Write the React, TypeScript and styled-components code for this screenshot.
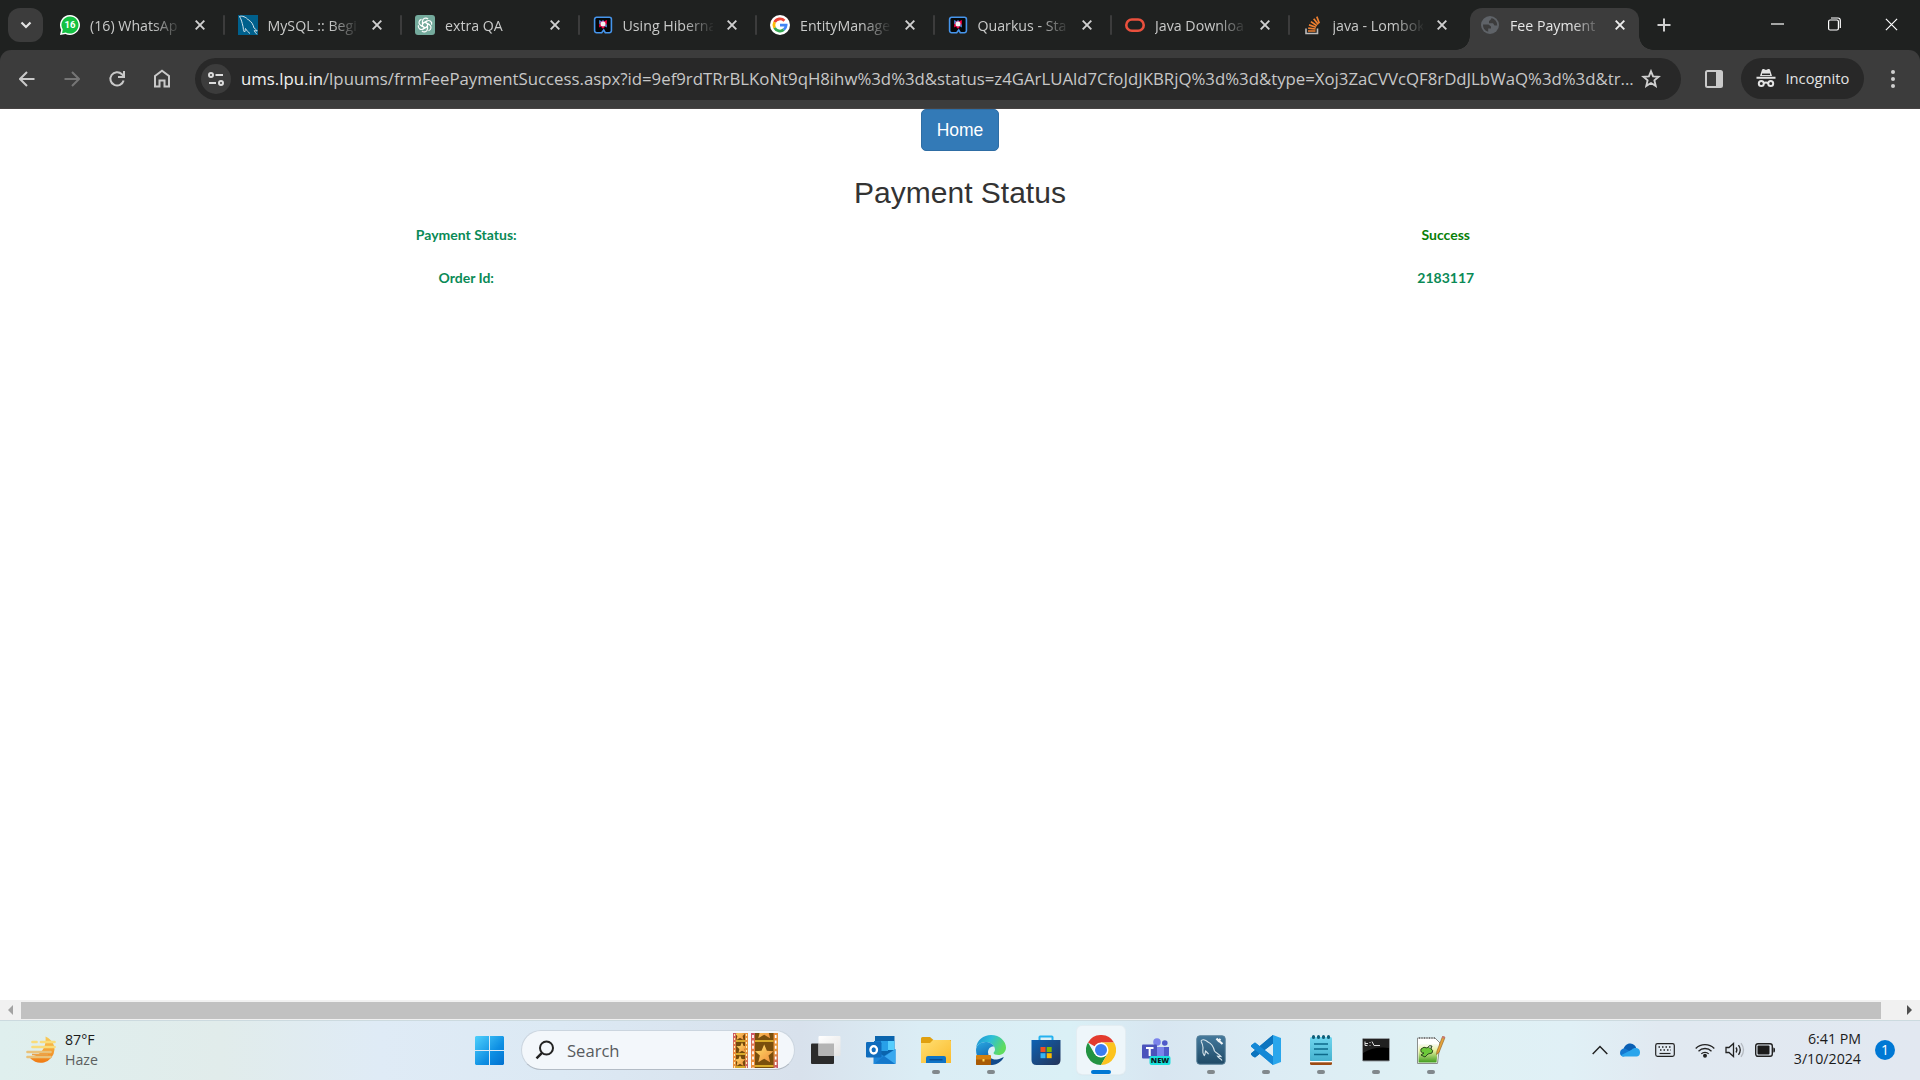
import React from "react";
import styled, { createGlobalStyle, css } from "styled-components";

const ui = `"Segoe UI", "Open Sans", "Noto Sans", sans-serif`;

const Global = createGlobalStyle`
  html, body { margin: 0; padding: 0; overflow: hidden; background: #fff; }
  *, *::before, *::after { box-sizing: border-box; }
  svg { display: block; flex: none; }
`;

const Screen = styled.div`
  width: 1920px;
  height: 1080px;
  display: flex;
  flex-direction: column;
  overflow: hidden;
  font-family: ${ui};
`;

/* ---------- tab strip ---------- */
const TabStrip = styled.div`
  height: 50px;
  flex: none;
  display: flex;
  background: #1f2120;
  padding-left: 8px;
`;
const TabSearch = styled.div`
  width: 35px;
  height: 34px;
  margin: 8px 4px 0 0;
  border-radius: 12px;
  background: #3c3c3c;
  display: flex;
  align-items: center;
  justify-content: center;
`;
const Tab = styled.div<{ $active?: boolean; $rule?: boolean }>`
  width: 177.5px;
  height: 50px;
  flex: none;
  display: flex;
  align-items: center;
  padding-left: 13px;
  position: relative;
  ${(p) =>
    p.$rule &&
    css`
      &::after {
        content: "";
        position: absolute;
        right: 0;
        top: 15px;
        width: 2px;
        height: 20px;
        border-radius: 1px;
        background: #3c3c3c;
      }
    `}
  ${(p) =>
    p.$active &&
    css`
      width: 169px;
      height: 42px;
      margin: 8px 0 0 3px;
      padding: 0 0 8px 10px;
      border-radius: 12px 12px 0 0;
      background: #3c3c3c;
      &::before,
      &::after {
        content: "";
        position: absolute;
        bottom: 0;
        width: 14px;
        height: 14px;
      }
      &::before {
        left: -14px;
        background: radial-gradient(circle at 0 0, transparent 13.5px, #3c3c3c 14px);
      }
      &::after {
        right: -14px;
        background: radial-gradient(circle at 100% 0, transparent 13.5px, #3c3c3c 14px);
      }
    `}
`;
const Favicon = styled.div`
  width: 20px;
  height: 20px;
  flex: none;
`;
const TabTitle = styled.div<{ $active?: boolean }>`
  width: 90px;
  margin-left: 10px;
  padding-top: 1px;
  overflow: hidden;
  white-space: nowrap;
  font-size: 14.2px;
  line-height: 22px;
  font-stretch: 92%;
  color: ${(p) => (p.$active ? "#e6e6e6" : "#c9cac9")};
  mask-image: linear-gradient(90deg, #000 62px, transparent 92px);
`;
const CloseSlot = styled.div`
  width: 20px;
  margin-left: 9.5px;
  display: flex;
  justify-content: center;
`;
const NewTab = styled.div`
  width: 49px;
  display: flex;
  align-items: center;
  justify-content: center;
`;
const WindowControls = styled.div`
  margin-left: auto;
  width: 171px;
  height: 48px;
  display: grid;
  grid-template-columns: repeat(3, 57px);
  place-items: center;
`;

/* ---------- toolbar ---------- */
const ToolbarBack = styled.div`
  height: 59px;
  flex: none;
  background: #1f2120;
`;
const Toolbar = styled.div`
  height: 59px;
  background: #3c3c3c;
  border-radius: 11px 11px 0 0;
  border-bottom: 1px solid #474343;
  display: flex;
  align-items: center;
  padding: 0 16px 1px 5px;
`;
const NavButton = styled.div`
  width: 44.75px;
  display: flex;
  justify-content: center;
`;
const Omnibox = styled.div`
  width: 1486px;
  height: 42px;
  margin-left: 11px;
  border-radius: 21px;
  background: #282828;
  display: flex;
  align-items: center;
  padding: 0 20px 0 6px;
`;
const SiteInfo = styled.div`
  width: 30px;
  height: 30px;
  border-radius: 50%;
  background: #3c3c3c;
  display: flex;
  align-items: center;
  justify-content: center;
`;
const Url = styled.div`
  margin-left: 10px;
  white-space: nowrap;
  font-size: 16.8px;
  line-height: 26px;
  font-stretch: 92%;
  color: #c7c7c7;
`;
const Host = styled.span`
  color: #f0f0f0;
`;
const StarSlot = styled.div`
  margin-left: auto;
`;
const PanelSlot = styled.div`
  margin-left: 24px;
`;
const Incognito = styled.div`
  width: 123px;
  height: 41px;
  margin-left: 18px;
  border-radius: 21px;
  background: #282828;
  display: flex;
  align-items: center;
  padding-left: 15px;
  gap: 9.5px;
  font-size: 14.7px;
  line-height: 20px;
  padding-bottom: 1px;
  color: #e3e3e3;
`;
const MenuSlot = styled.div`
  margin-left: auto;
  width: 22px;
  display: flex;
  justify-content: center;
`;

/* ---------- page ---------- */
const Page = styled.main`
  flex: 1;
  background: #fff;
  display: flex;
  flex-direction: column;
  align-items: center;
`;
const HomeButton = styled.button`
  width: 78px;
  height: 42px;
  padding: 0;
  border: 1px solid #2e6da4;
  border-radius: 5px;
  background: #337ab7;
  color: #fff;
  font: 17.5px/25px "Liberation Sans", Arial, sans-serif;
`;
const Heading = styled.h3`
  margin: 25px 0 13px;
  font: 400 30px/33px "Liberation Sans", Arial, sans-serif;
  color: #333;
`;
const Row = styled.div`
  width: 1959px;
  height: 43px;
  margin-right: 8px;
  display: grid;
  grid-template-columns: 1fr 1fr;
  justify-items: center;
`;
const Cell = styled.div<{ $color?: string }>`
  font: 700 14px/25px "Trebuchet MS", Lato, sans-serif;
  color: ${(p) => p.$color ?? "#0a8a56"};
`;

/* ---------- scrollbar ---------- */
const Scrollbar = styled.div`
  height: 20px;
  flex: none;
  display: flex;
  align-items: center;
  background: #f1f1f1;
`;
const ScrollArrow = styled.div<{ $dir: "left" | "right" }>`
  width: 0;
  border-top: 5px solid transparent;
  border-bottom: 5px solid transparent;
  ${(p) =>
    p.$dir === "left"
      ? css`
          border-right: 5px solid #a3a3a3;
          margin: 0 8px;
        `
      : css`
          border-left: 5px solid #505050;
          margin-left: 26px;
        `}
`;
const Thumb = styled.div`
  width: 1860px;
  height: 17px;
  background: #c1c1c1;
`;

/* ---------- taskbar ---------- */
const Taskbar = styled.footer`
  height: 60px;
  flex: none;
  display: flex;
  align-items: center;
  border-top: 1px solid #ccdadf;
  padding-bottom: 1px;
  background: linear-gradient(
    90deg,
    #dfefee 0,
    #e1eceb 220px,
    #dfebf6 380px,
    #dce9f4 560px,
    #d8e1ec 800px,
    #dbedf5 920px,
    #daf0f6 1070px,
    #d8e6f1 1160px,
    #dcecf4 1270px,
    #dff1f4 1450px,
    #e0f0f6 1570px,
    #e1e9f1 1660px,
    #e2e8f1 100%
  );
`;
const Weather = styled.div`
  width: 475px;
  padding-left: 26px;
  display: flex;
  align-items: center;
  gap: 9px;
`;
const TwoLines = styled.div<{ $end?: boolean }>`
  font-size: 14.2px;
  line-height: 20px;
  color: #1b1b1b;
  text-align: ${(p) => (p.$end ? "right" : "left")};
  padding-bottom: ${(p) => (p.$end ? "2px" : "0")};
`;
const Muted = styled.div`
  color: #5c6060;
`;
const SearchBox = styled.div`
  width: 274px;
  height: 40px;
  margin: 0 3px 0 17px;
  border: 1px solid #cbd5df;
  border-bottom-color: #b3bcc6;
  border-radius: 20px;
  background: #f3f7fb;
  display: flex;
  align-items: center;
  padding: 0 16px 0 13px;
  font-size: 16.6px;
  color: #585b5e;
  gap: 12px;
`;
const FilmSlot = styled.div`
  margin-left: auto;
`;
const AppSlot = styled.div`
  width: 55px;
  height: 58px;
  flex: none;
  display: flex;
  justify-content: center;
  align-items: center;
  position: relative;
`;
const AppTile = styled.div<{ $active?: boolean }>`
  width: 48px;
  height: 48px;
  border-radius: 5px;
  display: flex;
  align-items: center;
  justify-content: center;
  ${(p) => p.$active && "background: #eef6fa; box-shadow: 0 0 0 1px #e3edf2, 0 1px 1px #c9d5db;"}
`;
const Indicator = styled.div<{ $active?: boolean }>`
  position: absolute;
  bottom: 5px;
  width: ${(p) => (p.$active ? 20 : 8)}px;
  height: 4px;
  border-radius: 2px;
  background: ${(p) => (p.$active ? "#0078d4" : "#81888c")};
`;
const Tray = styled.div`
  margin-left: auto;
  display: flex;
  align-items: center;
  padding-right: 25px;
`;
const TrayIcon = styled.div<{ $gap: number }>`
  margin-right: ${(p) => p.$gap}px;
`;
const ClockSlot = styled.div`
  width: 86px;
`;
const Badge = styled.div`
  width: 20px;
  height: 20px;
  margin-left: 14px;
  border-radius: 50%;
  background: #0078d4;
  color: #fff;
  font-size: 14px;
  line-height: 20px;
  text-align: center;
`;

/* ---------- favicons ---------- */
const WhatsApp = () => (
  <svg width="20" height="20" viewBox="0 0 20 20">
    <path d="M10 0a10 10 0 1 1-4.6 18.9L0 20l1.2-5.2A10 10 0 0 1 10 0z" fill="#fff" />
    <path d="M10 1.4a8.6 8.6 0 1 1-4.3 16.1L2 18.2l.8-3.7A8.6 8.6 0 0 1 10 1.4z" fill="#14c143" />
    <text x="10" y="13.4" textAnchor="middle" fontSize="9.5" fontWeight="700" fill="#fff" fontFamily="Roboto, sans-serif">16</text>
  </svg>
);
const MySQL = () => (
  <svg width="20" height="20" viewBox="0 0 20 20">
    <rect width="20" height="20" fill="#00608c" />
    <path d="M1.500 1.500C4 .5 8 2 10.500 5c3 1.500 4.700 4.500 5.500 8 1 1 2.500 1.500 3.200 3l-3-.3c0 1 1.800 2 2.600 3.600M1.500 1.500c2 3 2.500 6 3.500 10 .5 2 0 4 1.500 5.500C7.500 16 7 14.500 7.500 13.500c1.200 2.300 3 3.800 4.500 5" fill="none" stroke="#d5e5ec" strokeWidth="1" />
  </svg>
);
const ChatGPT = () => (
  <svg width="20" height="20" viewBox="0 0 20 20">
    <rect width="20" height="20" rx="3" fill="#74aa9c" />
    <g fill="none" stroke="#fff" strokeWidth="1.150">
      {[0, 60, 120, 180, 240, 300].map((a) => (
        <path key={a} transform={`rotate(${a} 10 10)`} d="M7.500 11.400V6.300a3.200 3.200 0 0 1 5.600-2.100M7.500 8.600l4.600-2.700" />
      ))}
    </g>
  </svg>
);
const QuarkusIcon = () => (
  <svg width="20" height="20" viewBox="0 0 20 20">
    <path d="M8.700 17.700H3.600A2 2 0 0 1 1.600 15.700V4.300A2 2 0 0 1 3.600 2.300h12.800a2 2 0 0 1 2 2v11.400a2 2 0 0 1-2 2h-4.100L10.700 15z" fill="#050708" stroke="#4695eb" strokeWidth="1.600" />
    <path d="M6.200 5l3.800 2-3.800 2.300z" fill="#4695eb" />
    <path d="M13.800 5L10 7l3.800 2.300zM6.200 12.500V9L9 10.800zM10 13.800l-2-2h4z" fill="#ff004a" />
    <path d="M10 4.800l2 3H8zM13.800 12.500V9L11 10.800z" fill="#4695eb" />
    <path d="M7.200 6.800L10 5.800l2.800 1.200.6 2.200-1.200 2.300L10 12.400l-2.200-1L6.700 9.200z" fill="#ff004a" opacity=".6" />
    <circle cx="10" cy="9" r="2.500" fill="#f2f2f2" />
  </svg>
);
const Google = () => (
  <svg width="20" height="20" viewBox="0 0 20 20">
    <circle cx="10" cy="10" r="10" fill="#fff" />
    <g fill="none" strokeWidth="2.800">
      <path d="M14.400 5.800A6.100 6.100 0 0 0 4.600 7.200" stroke="#ea4335" />
      <path d="M4.600 7.200a6.100 6.100 0 0 0 0 5.600" stroke="#fbbc05" />
      <path d="M4.600 12.800a6.100 6.100 0 0 0 9.200 1.900" stroke="#34a853" />
      <path d="M10 10.200h6.100a6.100 6.100 0 0 1-2.300 4.500" stroke="#4285f4" />
    </g>
  </svg>
);
const Oracle = () => (
  <svg width="20" height="20" viewBox="0 0 20 20">
    <rect x="1.300" y="4.500" width="17.400" height="11.300" rx="5.600" fill="none" stroke="#ea503d" strokeWidth="2.600" />
  </svg>
);
const Stack = () => (
  <svg width="20" height="20" viewBox="0 0 20 20">
    <path d="M3 13.500V18.500h11.500V13.500" fill="none" stroke="#bcbbbb" strokeWidth="1.600" />
    <path d="M5 16h7.500M5.200 13.100l7.400.9M6 9.900l7 2.300M7.900 6.600l6 4.100M10.700 3.700l4.500 5.700M13.800 1.600l2.500 6.700" fill="none" stroke="#ef8030" strokeWidth="1.700" />
  </svg>
);
const Globe = () => (
  <svg width="20" height="20" viewBox="0 0 20 20">
    <circle cx="10" cy="10" r="9" fill="#5f6368" />
    <path d="M3 9.500h5.500l2.500 2v2H8.200v3.300A7.300 7.300 0 0 1 3 9.500zM11.500 3c0 1.500-1.800 2.200-2.500 3.300v2h4l1.500 2.200h2.700A7.300 7.300 0 0 0 11.500 3z" fill="#3c3c3c" />
  </svg>
);

/* ---------- chrome glyphs ---------- */
const Cross = ({ size = 10, width = 1.9, color = "#d0d0d0" }) => (
  <svg width={size} height={size} viewBox="0 0 10 10">
    <path d="M.7.7l8.600 8.600M9.300.7L.7 9.300" stroke={color} strokeWidth={width} fill="none" />
  </svg>
);
const Arrow = ({ forward }: { forward?: boolean }) => (
  <svg width="16" height="16" viewBox="0 0 16 16" fill="none" stroke={forward ? "#757575" : "#c9c9c9"} strokeWidth="2">
    {forward ? <path d="M.5 8h14M8 1l7 7-7 7" /> : <path d="M15.500 8h-14M8 1L1 8l7 7" />}
  </svg>
);
const Reload = () => (
  <svg width="18" height="18" viewBox="0 0 18 18" fill="none" stroke="#c9c9c9" strokeWidth="2">
    <path d="M15.600 10.500A6.700 6.700 0 1 1 13.900 4.200L16 6.500" />
    <path d="M16 1v6h-6" />
  </svg>
);
const HomeGlyph = () => (
  <svg width="18" height="19" viewBox="0 0 18 19" fill="none" stroke="#c9c9c9" strokeWidth="2">
    <path d="M2 7L9 1.700 16 7v10.500h-4.500v-6h-5v6H2z" />
  </svg>
);
const Tune = () => (
  <svg width="16" height="14" viewBox="0 0 16 14" fill="none" stroke="#dcdcdc" strokeWidth="2">
    <circle cx="3" cy="3" r="2" />
    <path d="M7.500 3H15M1 11h7" />
    <circle cx="13" cy="11" r="2" />
  </svg>
);
const Star = () => (
  <svg width="20" height="20" viewBox="0 0 20 20" fill="none" stroke="#cfcfcf" strokeWidth="1.900">
    <path d="M10 2.300l2.100 5.100 5.500.4-4.200 3.600 1.300 5.500L10 14l-4.700 2.900 1.300-5.500-4.200-3.600 5.500-.4z" />
  </svg>
);
const SidePanel = () => (
  <svg width="18" height="18" viewBox="0 0 18 18">
    <rect x="1" y="1" width="16" height="16" rx="1.500" fill="none" stroke="#cacaca" strokeWidth="2" />
    <path d="M11 1h6v16h-6z" fill="#cacaca" />
  </svg>
);
const Spy = () => (
  <svg width="20" height="20" viewBox="0 0 20 20">
    <path d="M.5 8.800h19v2H.5zM4 8L6 1.800C6.300.9 7 .8 7.800 1.100L10 1.900l2.200-.8c.8-.3 1.500-.2 1.800.7L16 8z" fill="#e3e3e3" />
    <path d="M6 6.300h8" stroke="#282828" strokeWidth="1.500" />
    <g fill="none" stroke="#e3e3e3" strokeWidth="2">
      <circle cx="5.300" cy="15.500" r="2.500" />
      <circle cx="14.700" cy="15.500" r="2.500" />
      <path d="M7.800 15.300c1.300-.9 3-.9 4.400 0" />
    </g>
  </svg>
);

/* ---------- taskbar icons ---------- */
const HazeIcon = () => (
  <svg width="30" height="30" viewBox="0 0 30 30">
    <defs>
      <linearGradient id="moon" x1="0" y1="0" x2="0" y2="1">
        <stop offset="0" stopColor="#f8cd5c" />
        <stop offset="1" stopColor="#f07a12" />
      </linearGradient>
    </defs>
    <path d="M19.500 1.500C25 4 28.500 8.500 28.500 14.500A14 14 0 0 1 2.500 21C10 22.500 21 17 19.500 1.500z" fill="url(#moon)" />
    <path d="M6.500 7h4M15 7h13.500M6.500 12h22" stroke="#f9dc7a" strokeWidth="2.700" strokeLinecap="round" />
    <path d="M1.500 17h23M1.500 22h23" stroke="#e9c27a" strokeWidth="2.700" strokeLinecap="round" />
    <path d="M6 19.500h16" stroke="#e9a14a" strokeWidth="1.500" />
  </svg>
);
const Windows = () => (
  <svg width="29" height="29" viewBox="0 0 29 29">
    <defs>
      <linearGradient id="win" gradientUnits="userSpaceOnUse" x1="0" y1="0" x2="29" y2="29">
        <stop offset="0" stopColor="#4fd0fc" />
        <stop offset=".6" stopColor="#0e8fe3" />
        <stop offset="1" stopColor="#0270cf" />
      </linearGradient>
    </defs>
    <path d="M1 0h13v14H0V1zM15 0h13l1 1v13H15zM0 15h14v14H1l-1-1zM15 15h14v13l-1 1H15z" fill="url(#win)" />
  </svg>
);
const Magnifier = () => (
  <svg width="20" height="20" viewBox="0 0 20 20" fill="none" stroke="#222" strokeWidth="2">
    <circle cx="11.500" cy="8" r="6.500" />
    <path d="M7 12.800L1.500 18.300" strokeWidth="2.400" />
  </svg>
);
const star5 = "M0-9.500L2.700-3.300 9.300-2.800 4.300 1.600 5.900 8.200 0 4.700-5.900 8.200-4.300 1.600-9.300-2.800-2.700-3.300z";
const Film = () => (
  <svg width="45" height="35" viewBox="0 0 45 35">
    <defs>
      <linearGradient id="film" x1="0" y1="0" x2="1" y2="1">
        <stop offset="0" stopColor="#c9506b" />
        <stop offset=".35" stopColor="#ec8a3a" />
        <stop offset=".7" stopColor="#e7993c" />
        <stop offset="1" stopColor="#c4506c" />
      </linearGradient>
      <linearGradient id="gold" x1="0" y1="0" x2="1" y2="1">
        <stop offset="0" stopColor="#ffe36a" />
        <stop offset="1" stopColor="#f08b3c" />
      </linearGradient>
      <clipPath id="fa"><rect x="3" width="9" height="35" /></clipPath>
      <clipPath id="fb"><rect x="22" width="18" height="35" /></clipPath>
    </defs>
    <rect width="15" height="35" fill="url(#film)" />
    <rect x="3" width="9" height="35" fill="#734a0c" />
    <rect x="18" width="27" height="35" fill="url(#film)" />
    <rect x="22" width="18.500" height="35" fill="#7a4f0d" />
    <path d="M1.500 1v34M13.500 1v34" stroke="#fff0ad" strokeWidth="1.100" strokeDasharray="2 2" />
    <path d="M20 2v33M42.700 2v33" stroke="#fff" strokeWidth="1.700" strokeDasharray="3 2.400" />
    <path d="M3 8h9M3 21h9M3 34h9M22 8h18.500M22 33h18.500" stroke="#f9c934" strokeWidth="1.700" />
    <g fill="url(#gold)">
      <g clipPath="url(#fa)">
        <path d={star5} transform="translate(9 15) scale(.6)" />
        <path d={star5} transform="translate(7 28) scale(.6)" />
        <path d={star5} transform="translate(7 2) scale(.6)" />
      </g>
      <g clipPath="url(#fb)">
        <path d={star5} transform="translate(31.200 21)" />
        <path d={star5} transform="translate(31.200 -3)" />
      </g>
    </g>
  </svg>
);
const TaskView = () => (
  <svg width="30" height="30" viewBox="0 0 30 30">
    <defs>
      <linearGradient id="tv" x1="0" y1="0" x2="1" y2="1">
        <stop offset="0" stopColor="#fff" />
        <stop offset="1" stopColor="#e4e4e4" />
      </linearGradient>
    </defs>
    <rect x="0" y="8.500" width="23" height="20.500" rx="1" fill="#2b2b2b" />
    <rect x="7.500" y="1" width="22" height="20" rx="1" fill="url(#tv)" />
    <path d="M7.500 8.500H23V21H7.500z" fill="#b4b4b4" />
  </svg>
);
const Outlook = () => (
  <svg width="30" height="30" viewBox="0 0 30 30">
    <path d="M9 1h19.500v20H9z" fill="#0a64ad" />
    <path d="M8 6h7v9H8z" fill="#1275c6" />
    <path d="M15 6h7v10h-7z" fill="#28a0e8" />
    <path d="M22 6h6.500v9H22z" fill="#55cdfd" />
    <path d="M7.500 14.500L18 21l11.500-7v15h-22z" fill="#1c86d9" />
    <path d="M7.500 29L29.500 14v14l-1 1z" fill="#39a8ef" />
    <path d="M8 28.800L29.200 29 18 21z" fill="#1478cb" />
    <rect x="0" y="7" width="15.500" height="15.500" rx="1.200" fill="#0f6cbd" />
    <ellipse cx="7.700" cy="14.800" rx="3.300" ry="3.700" fill="none" stroke="#fff" strokeWidth="2.300" />
  </svg>
);
const Explorer = () => (
  <svg width="30" height="30" viewBox="0 0 30 30">
    <defs>
      <linearGradient id="fold" x1="0" y1="0" x2="1" y2="1">
        <stop offset="0" stopColor="#ffdf73" />
        <stop offset="1" stopColor="#fbbb2c" />
      </linearGradient>
    </defs>
    <path d="M0 3.500Q0 2 1.500 2H9l3.500 3H30v10H0z" fill="#e0a010" />
    <path d="M0 8h9l3-3h16.500Q30 5 30 6.500V28H0z" fill="url(#fold)" />
    <path d="M5 28v-5q0-2 2-2h16q2 0 2 2v5z" fill="#0f74c6" />
    <path d="M8.500 24.700h13" stroke="#0b4d90" strokeWidth="1.400" />
  </svg>
);
const Edge = () => (
  <svg width="30" height="30" viewBox="0 0 30 30">
    <defs>
      <linearGradient id="eg" x1="0" y1="0" x2="1" y2=".4">
        <stop offset="0" stopColor="#1e8fd5" />
        <stop offset=".5" stopColor="#2dbfd8" />
        <stop offset="1" stopColor="#5fdc5e" />
      </linearGradient>
      <linearGradient id="eb" x1="0" y1="0" x2=".4" y2="1">
        <stop offset="0" stopColor="#2aa9e2" />
        <stop offset="1" stopColor="#0c57a6" />
      </linearGradient>
    </defs>
    <path d="M0 13C1 5 7.500 0 15 0c9 0 15 6.500 15 12.500 0 5-4 7.500-7.500 7.500-3 0-5-1-5-2 0-.7 1.500-1.500 1.500-3.500C19 10 14 7 9.500 7 5 7 1.500 9.500 0 13z" fill="url(#eg)" />
    <path d="M0 15C0 10 4.500 7 9.500 7c3.500 0 7.500 2 8.500 4.500-3-.6-6 1.500-6 6 0 5 4.500 9.500 9.500 9-1.500 1.700-4 3.500-7.500 3.500C6 30 0 23.500 0 15z" fill="url(#eb)" />
    <path d="M12 17.500c0 4.500 4 7.500 9 7 3-.3 5.500-2 6.800-2.500C26 26.500 20.500 30 15 30z" fill="#114a8b" />
    <rect x="0" y="20" width="15" height="10" rx="1" fill="#d5800d" />
    <path d="M0 24.500h15V29q0 1-1 1H1q-1 0-1-1z" fill="#a85a04" />
    <path d="M6.500 24h2v2.500h-2z" fill="#ffd453" />
  </svg>
);
const Store = () => (
  <svg width="30" height="30" viewBox="0 0 30 30">
    <defs>
      <linearGradient id="bag" x1="0" y1="0" x2="1" y2="1">
        <stop offset="0" stopColor="#0e62b4" />
        <stop offset="1" stopColor="#243458" />
      </linearGradient>
    </defs>
    <path d="M8.500 7V2.200Q8.500 1.500 9.200 1.500h11.600q.7 0 .7.700V7" fill="none" stroke="#24b2ef" strokeWidth="2" />
    <path d="M.5 5h29v20q0 5-5 5h-19q-5 0-5-5z" fill="url(#bag)" />
    <path d="M9.500 12h5v5h-5z" fill="#f25022" />
    <path d="M15.700 12h5v5h-5z" fill="#7fba00" />
    <path d="M9.500 18.200h5v5h-5z" fill="#35b5f3" />
    <path d="M15.700 18.200h5v5h-5z" fill="#ffb900" />
  </svg>
);
const Chrome = () => (
  <svg width="30" height="30" viewBox="0 0 30 30">
    <path d="M15 15L2 7.500A15 15 0 0 1 28 7.500H15z" fill="#e33b2e" />
    <path d="M15 15l6.500 3.750L15 30A15 15 0 0 1 2 7.500l6.500 11.250z" fill="#229342" />
    <path d="M15 7.500h13A15 15 0 0 1 15 30l6.500-11.250z" fill="#fcc31e" />
    <circle cx="15" cy="15" r="7.500" fill="#fff" />
    <circle cx="15" cy="15" r="6" fill="#3b7df0" />
  </svg>
);
const Teams = () => (
  <svg width="30" height="30" viewBox="0 0 30 30">
    <circle cx="16" cy="7" r="3.800" fill="#7b83eb" />
    <circle cx="23.800" cy="8" r="2.800" fill="#5059c9" />
    <path d="M16 12h12v8q-1 5-6 5h-6z" fill="#5059c9" />
    <path d="M11 12h12v12H11z" fill="#7b83eb" />
    <rect x="1" y="9.500" width="15" height="14" rx="1" fill="#4b53bc" />
    <path d="M5 13h7.500M8.700 13v8" stroke="#fff" strokeWidth="2.100" />
    <rect x="8.500" y="21" width="21" height="9" rx="2" fill="#1be0dc" />
    <text x="19" y="28.200" textAnchor="middle" fontFamily="Open Sans, sans-serif" fontWeight="800" fontSize="7.600" fill="#061c22">NEW</text>
  </svg>
);
const Workbench = () => (
  <svg width="30" height="30" viewBox="0 0 30 30">
    <defs>
      <linearGradient id="wb" x1="0" y1="0" x2="0" y2="1">
        <stop offset="0" stopColor="#44799c" />
        <stop offset="1" stopColor="#1f4a66" />
      </linearGradient>
    </defs>
    <rect x=".8" y=".8" width="28.400" height="28.400" rx="3" fill="url(#wb)" stroke="#567f99" />
    <path d="M5 6c1-2 4-1.500 7 1 3.500 1.500 5.500 5 6.500 9 1.500 2 4.500 3 6.500 5.500l-3.500-.3c1 1.800 3.500 2.300 4.500 4.300M5 6c1 2 2 4 2 6.500.2 2.500-1.500 5 1.300 8 1.200-1 .6-3 1.300-4.500 1.200 1 2 2 3 3.200" fill="none" stroke="#d6e3ea" strokeWidth="1.100" />
    <path d="M20.500 3.500l2 2.200 2-1.700M22.500 5.500l4 3.500" stroke="#f1f5f7" strokeWidth="2.200" fill="none" />
  </svg>
);
const Code = () => (
  <svg width="30" height="30" viewBox="0 0 30 30">
    <path d="M22 0l8 3v24l-8 3z" fill="#29a6ec" />
    <path d="M22 0v8.500L4 22.500 0 19.500v-1z" fill="#0065a9" />
    <path d="M0 10.500l4-3 18 14V30L0 11.500z" fill="#0b82d0" />
    <path d="M22 0L0 18.500l1 2.500 3 1.500L22 8.500z" fill="#0b74bf" />
    <path d="M0 11.500l.5-1.500L4 7.500 22 21.500V30z" fill="#1488d6" />
  </svg>
);
const Notepad = () => (
  <svg width="30" height="30" viewBox="0 0 30 30">
    <defs>
      <linearGradient id="np" x1="0" y1="0" x2="0" y2="1">
        <stop offset="0" stopColor="#6fd5ee" />
        <stop offset="1" stopColor="#45b2cf" />
      </linearGradient>
    </defs>
    <rect x="4" y="25" width="22" height="5" rx="1.500" fill="#9c4a12" />
    <path d="M4 26h22v1.300H4z" fill="#fff" />
    <rect x="4" y="2" width="22" height="24" rx="1.500" fill="url(#np)" />
    <path d="M7.500 1.500v1M12.500 1.500v1M17.500 1.500v1M22.500 1.500v1" stroke="#0f5e78" strokeWidth="3" strokeLinecap="round" />
    <path d="M8 9h14M8 14h14M8 19.500h14" stroke="#0d6a8a" strokeWidth="1.600" />
  </svg>
);
const Terminal = () => (
  <svg width="30" height="30" viewBox="0 0 30 30">
    <rect x="1.500" y="3.500" width="27" height="22.500" rx="1" fill="#000" stroke="#969da1" />
    <path d="M2 4h26v9Q14 11 2 18z" fill="#fff" opacity=".13" />
    <path d="M4 8.500h3M4 6.500v4h2.500M9 7v1M9 10v.8M11 6.500l2 4h6" stroke="#ddd" strokeWidth="1" fill="none" />
  </svg>
);
const NotepadPP = () => (
  <svg width="30" height="30" viewBox="0 0 30 30">
    <defs>
      <linearGradient id="npp" x1="0" y1="0" x2="0" y2="1">
        <stop offset="0" stopColor="#f7faf5" />
        <stop offset=".35" stopColor="#e8f2a0" />
        <stop offset="1" stopColor="#3f9c1c" />
      </linearGradient>
    </defs>
    <path d="M1.500 3H19l5 5-2.500 20.500H1.500z" fill="#fff" stroke="#8b8e8c" />
    <path d="M2.500 9H22.500l-2 18.500H2.500z" fill="url(#npp)" />
    <path d="M3 3h16" stroke="#666" strokeWidth="1.500" strokeDasharray="1 1.500" />
    <path d="M5 14q3-3 6-1 2-3 5-2l-1 3q3 1 1 4l-4 1-3 3-4-2 3-2q-4 0-3-4z" fill="#6dc83a" stroke="#233a18" strokeWidth=".9" />
    <circle cx="14" cy="12" r="1.300" fill="#fff" stroke="#233a18" strokeWidth=".6" />
    <path d="M26.500 1.500L21 16l-.5 3.500 2.500-2L29 2.500z" fill="#e5a33a" stroke="#8a5a1c" strokeWidth=".6" />
    <path d="M26 3l1-2 2 .8-.9 2z" fill="#c77" />
  </svg>
);

/* ---------- tray ---------- */
const Chevron = () => (
  <svg width="16" height="10" viewBox="0 0 16 10"><path d="M.7 9L8 1.500 15.300 9" fill="none" stroke="#222" strokeWidth="1.500" /></svg>
);
const OneDrive = () => (
  <svg width="20" height="14" viewBox="0 0 20 14">
    <path d="M3.500 6C5 1.500 8 .3 10.500.5c3 .2 5 2.200 5.700 4.500L10 9z" fill="#0a5fb4" />
    <path d="M0 10c0-3 2.500-4.800 5.500-4.300L13 10 3.500 13.500C1.500 13.500 0 12 0 10z" fill="#1478d0" />
    <path d="M12 6.500C13.500 4.500 20 4 20 9.500c0 2.500-1.500 4-3.500 4h-13c-1 0-2-.5-2.500-1.300z" fill="#2aa5ec" />
  </svg>
);
const Keyboard = () => (
  <svg width="20" height="14" viewBox="0 0 20 14" fill="none" stroke="#222">
    <rect x=".7" y=".7" width="18.600" height="12.600" rx="1.800" strokeWidth="1.200" />
    <path d="M3.500 4h13.500M5 7h11" strokeWidth="1.500" strokeDasharray="1.500 2" />
    <path d="M4.500 10.500h11" strokeWidth="1.200" />
  </svg>
);
const Wifi = () => (
  <svg width="20" height="16" viewBox="0 0 20 16" fill="none" stroke="#222" strokeWidth="1.300">
    <path d="M.7 6.500a13 13 0 0 1 18.600 0M3.500 9.200a9.200 9.200 0 0 1 13 0M6.300 11.900a5.200 5.200 0 0 1 7.400 0" />
    <circle cx="10" cy="13.800" r="1.300" fill="#222" />
  </svg>
);
const Speaker = () => (
  <svg width="20" height="16" viewBox="0 0 20 16" fill="none" stroke="#222" strokeWidth="1.300">
    <path d="M1 5.500h3L8.500 1.500v13L4 10.500H1z" />
    <path d="M11 5.500q1.800 2.500 0 5M13.500 3.200q3.500 4.800 0 9.600" />
    <path d="M16 1.200q5 6.800 0 13.600" stroke="#b5bac1" />
  </svg>
);
const Battery = () => (
  <svg width="20" height="14" viewBox="0 0 20 14">
    <rect x=".7" y=".7" width="16.600" height="12.600" rx="2.200" fill="none" stroke="#222" strokeWidth="1.400" />
    <rect x="2.500" y="2.500" width="12" height="9" rx="1" fill="#1b1b1b" />
    <path d="M18.300 4.500q1.700 0 1.700 1.500v2q0 1.500-1.700 1.500z" fill="#222" />
  </svg>
);

const tabs = [
  { title: "(16) WhatsAp", icon: <WhatsApp /> },
  { title: "MySQL :: Begi", icon: <MySQL /> },
  { title: "extra QA", icon: <ChatGPT /> },
  { title: "Using Hiberna", icon: <QuarkusIcon /> },
  { title: "EntityManage", icon: <Google /> },
  { title: "Quarkus - Sta", icon: <QuarkusIcon /> },
  { title: "Java Downloa", icon: <Oracle /> },
  { title: "java - Lombok", icon: <Stack /> },
];

const apps = [
  { icon: <TaskView /> },
  { icon: <Outlook /> },
  { icon: <Explorer />, open: true },
  { icon: <Edge />, open: true },
  { icon: <Store /> },
  { icon: <Chrome />, open: true, active: true },
  { icon: <Teams /> },
  { icon: <Workbench />, open: true },
  { icon: <Code />, open: true },
  { icon: <Notepad />, open: true },
  { icon: <Terminal />, open: true },
  { icon: <NotepadPP />, open: true },
];

export default function App() {
  return (
    <Screen>
      <Global />
      <TabStrip>
        <TabSearch>
          <svg width="12" height="8" viewBox="0 0 12 8"><path d="M1.500 1.500L6 6l4.500-4.500" fill="none" stroke="#e3e3e3" strokeWidth="2.200" /></svg>
        </TabSearch>
        {tabs.map((t, i) => (
          <Tab key={t.title} $rule={i < tabs.length - 1}>
            <Favicon>{t.icon}</Favicon>
            <TabTitle>{t.title}</TabTitle>
            <CloseSlot><Cross /></CloseSlot>
          </Tab>
        ))}
        <Tab $active>
          <Favicon><Globe /></Favicon>
          <TabTitle $active>Fee Payment</TabTitle>
          <CloseSlot><Cross color="#eeeeee" /></CloseSlot>
        </Tab>
        <NewTab>
          <svg width="14" height="14" viewBox="0 0 14 14"><path d="M7 .5v13M.5 7h13" stroke="#cfcfcf" strokeWidth="2" /></svg>
        </NewTab>
        <WindowControls>
          <svg width="13" height="2" viewBox="0 0 13 2"><path d="M0 1h13" stroke="#fff" strokeWidth="1.200" /></svg>
          <svg width="13" height="14" viewBox="0 0 13 14" fill="none" stroke="#fff" strokeWidth="1.200">
            <rect x=".6" y="3" width="9.800" height="10" rx="1.500" />
            <path d="M3 1h7q2.300 0 2.300 2.300V11" />
          </svg>
          <Cross size={13} width={0.9} color="#fff" />
        </WindowControls>
      </TabStrip>
      <ToolbarBack>
        <Toolbar>
          <NavButton><Arrow /></NavButton>
          <NavButton><Arrow forward /></NavButton>
          <NavButton><Reload /></NavButton>
          <NavButton><HomeGlyph /></NavButton>
          <Omnibox>
            <SiteInfo><Tune /></SiteInfo>
            <Url>
              <Host>ums.lpu.in</Host>/lpuums/frmFeePaymentSuccess.aspx?id=9ef9rdTRrBLKoNt9qH8ihw%3d%3d&amp;status=z4GArLUAld7CfoJdJKBRjQ%3d%3d&amp;type=Xoj3ZaCVVcQF8rDdJLbWaQ%3d%3d&amp;tr...
            </Url>
            <StarSlot><Star /></StarSlot>
          </Omnibox>
          <PanelSlot><SidePanel /></PanelSlot>
          <Incognito><Spy />Incognito</Incognito>
          <MenuSlot>
            <svg width="4" height="18" viewBox="0 0 4 18" fill="#cfcfcf"><circle cx="2" cy="2" r="2" /><circle cx="2" cy="9" r="2" /><circle cx="2" cy="16" r="2" /></svg>
          </MenuSlot>
        </Toolbar>
      </ToolbarBack>
      <Page>
        <HomeButton>Home</HomeButton>
        <Heading>Payment Status</Heading>
        <Row>
          <Cell>Payment Status:</Cell>
          <Cell $color="#088008">Success</Cell>
        </Row>
        <Row>
          <Cell>Order Id:</Cell>
          <Cell>2183117</Cell>
        </Row>
      </Page>
      <Scrollbar>
        <ScrollArrow $dir="left" />
        <Thumb />
        <ScrollArrow $dir="right" />
      </Scrollbar>
      <Taskbar>
        <Weather>
          <HazeIcon />
          <TwoLines>
            87°F
            <Muted>Haze</Muted>
          </TwoLines>
        </Weather>
        <Windows />
        <SearchBox>
          <Magnifier />
          Search
          <FilmSlot><Film /></FilmSlot>
        </SearchBox>
        {apps.map((a, i) => (
          <AppSlot key={i}>
            <AppTile $active={a.active}>{a.icon}</AppTile>
            {a.open && <Indicator $active={a.active} />}
          </AppSlot>
        ))}
        <Tray>
          <TrayIcon $gap={12}><Chevron /></TrayIcon>
          <TrayIcon $gap={15}><OneDrive /></TrayIcon>
          <TrayIcon $gap={20}><Keyboard /></TrayIcon>
          <TrayIcon $gap={10}><Wifi /></TrayIcon>
          <TrayIcon $gap={10}><Speaker /></TrayIcon>
          <Battery />
          <ClockSlot>
            <TwoLines $end>
              6:41 PM
              <div>3/10/2024</div>
            </TwoLines>
          </ClockSlot>
          <Badge>1</Badge>
        </Tray>
      </Taskbar>
    </Screen>
  );
}
